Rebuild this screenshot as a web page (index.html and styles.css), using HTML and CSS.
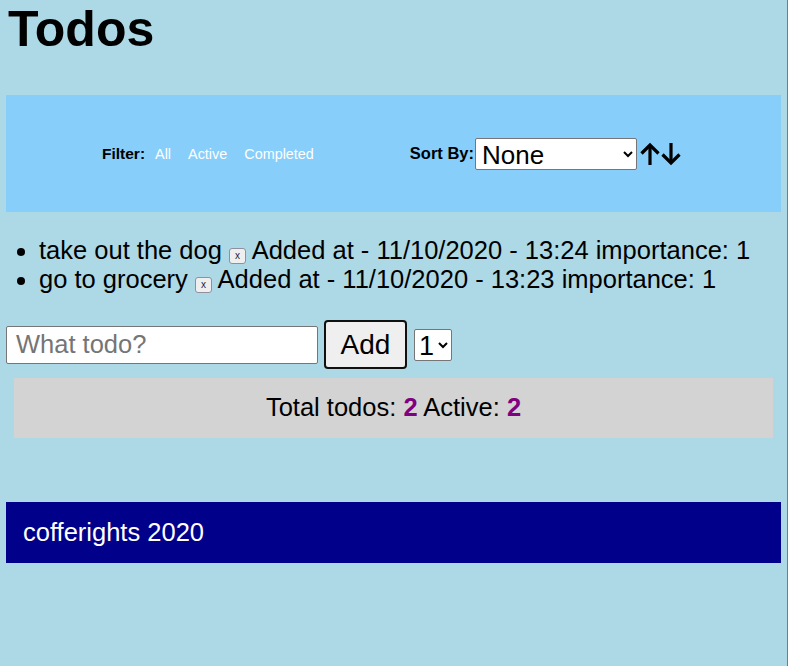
FILE: index.html
```html
<!DOCTYPE html>
<html lang="en">
<head>
<meta charset="utf-8">
<title>Todos</title>
<link rel="stylesheet" href="styles.css">
</head>
<body>
<h1 class="title">Todos</h1>
<div class="toolbar">
  <div class="filter">
    <span class="label">Filter:</span>
    <div class="links">
      <a href="#" class="link">All</a>
      <a href="#" class="link">Active</a>
      <a href="#" class="link">Completed</a>
    </div>
  </div>
  <div class="sort">
    <span class="label">Sort By:</span>
    <select class="sort-select"><option>None</option><option>Date</option><option>Importance</option></select>
    <svg class="arrows" width="46" height="26" viewBox="0 0 46 26" aria-hidden="true">
      <g fill="none" stroke="#000" stroke-width="3.2" stroke-linecap="butt" stroke-linejoin="miter">
        <path d="M11 4 V24"/>
        <path d="M2.5 12.5 L11 4 L19.5 12.5"/>
        <path d="M32 2 V22"/>
        <path d="M23.5 13.5 L32 22 L40.5 13.5"/>
      </g>
    </svg>
  </div>
</div>
<ul class="todos">
  <li>take out the dog <button class="del">x</button> Added at - 11/10/2020 - 13:24 importance: 1</li>
  <li>go to grocery <button class="del">x</button> Added at - 11/10/2020 - 13:23 importance: 1</li>
</ul>
<form class="add-form">
  <input class="todo-input" type="text" placeholder="What todo?">
  <button class="add-btn" type="button">Add</button>
  <select class="imp-select"><option>1</option><option>2</option><option>3</option></select>
</form>
<div class="stats">Total todos: <b class="num">2</b> Active: <b class="num">2</b></div>
<footer class="footer">cofferights 2020</footer>
</body>
</html>
```
FILE: styles.css
```css
html {
  background: #add8e6;
  border-right: 1px solid #6f8087;
  min-height: 100%;
}
body {
  margin: 0 6px;
  font-family: "Liberation Sans", Arial, sans-serif;
  font-size: 25.5px;
  color: #000;
}
.title {
  margin: 0 0 37px;
  font-size: 50px;
  font-weight: bold;
  line-height: 58px;
  padding-left: 2px;
}
.toolbar {
  background: #87cefa;
  height: 117px;
  display: flex;
  justify-content: space-evenly;
  align-items: center;
}
.filter, .sort {
  display: flex;
  align-items: center;
}
.label {
  font-weight: bold;
  font-size: 15.5px;
}
.sort .label {
  font-size: 16.5px;
}
.links {
  display: flex;
  gap: 17px;
  margin-left: 10px;
}
.link {
  color: #fff;
  text-decoration: none;
  font-size: 14.4px;
}
.sort-select {
  width: 162px;
  height: 32px;
  font-family: "Liberation Sans", Arial, sans-serif;
  font-size: 26px;
  margin: 0 0 0 1px;
  padding: 0 0 0 2px;
  border: 1px solid #767676;
  border-radius: 2px;
  background: #fff;
  color: #000;
}
.arrows {
  display: block;
  margin-left: 2px;
}
.todos {
  margin: 24px 0 25.5px;
  padding-left: 33px;
  line-height: 29px;
}
.del {
  font-family: "Liberation Sans", Arial, sans-serif;
  font-size: 10px;
  color: #1b1b4a;
  background: #efefef;
  border: 1px solid #8f8f9d;
  border-radius: 3px;
  padding: 0;
  width: 17px;
  height: 16px;
  line-height: 12px;
  vertical-align: baseline;
}
.add-form {
  display: flex;
  align-items: center;
  height: 50px;
}
.todo-input {
  width: 312px;
  height: 38px;
  box-sizing: border-box;
  border: 1px solid #767676;
  border-radius: 2px;
  padding: 0 9px;
  font-family: "Liberation Sans", Arial, sans-serif;
  font-size: 25.5px;
  margin: 0;
  background: #fff;
}
.todo-input::placeholder {
  color: #757575;
}
.add-btn {
  margin-left: 6px;
  width: 83px;
  height: 49px;
  box-sizing: border-box;
  font-family: "Liberation Sans", Arial, sans-serif;
  font-size: 28px;
  color: #000;
  background: #efefef;
  border: 2px solid #101010;
  border-radius: 4px;
  padding: 0;
}
.imp-select {
  margin-left: 7px;
  width: 38px;
  height: 32px;
  box-sizing: border-box;
  font-family: "Liberation Sans", Arial, sans-serif;
  font-size: 27px;
  padding: 0;
  border: 1px solid #767676;
  border-radius: 2px;
  background: #fff;
  color: #000;
}
.stats {
  margin: 8px 8px 0;
  background: #d3d3d3;
  text-align: center;
  padding: 15.5px 0;
  line-height: 29px;
}
.num {
  color: #800080;
}
.footer {
  margin-top: 64px;
  background: #00008b;
  color: #fff;
  height: 61px;
  box-sizing: border-box;
  padding: 16px 17px;
  line-height: 29px;
}
```
